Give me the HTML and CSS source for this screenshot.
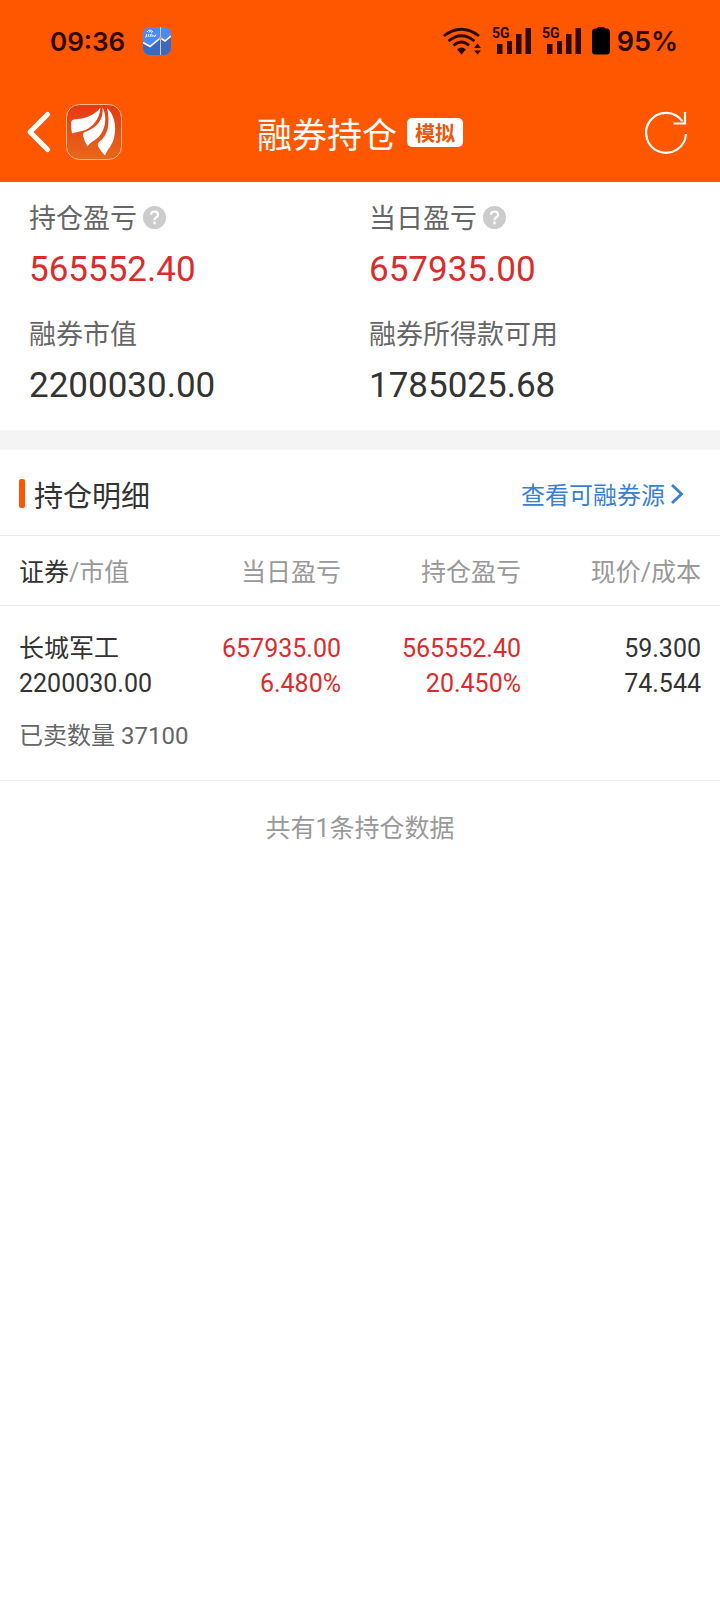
FILE: index.html
```html
<!DOCTYPE html>
<html lang="zh-CN">
<head>
<meta charset="utf-8">
<meta name="viewport" content="width=device-width, initial-scale=1">
<title>融券持仓</title>
<link rel="stylesheet" href="styles.css">
</head>
<body>
<header class="top">
  <div class="status">
    <div class="status-left">
      <span class="clock">09:36</span>
      <svg class="status-app" width="28" height="28" viewBox="0 0 28 28" aria-hidden="true">
        <defs><clipPath id="tile"><rect width="28" height="28" rx="7"/></clipPath></defs>
        <g clip-path="url(#tile)">
          <rect width="28" height="28" fill="#4a8cf7"/>
          <path d="M0 15L7 19L17 11L22 14L28 9V28H0Z" fill="#3a69bd"/>
          <path d="M17.500 0V28" stroke="#d9c9a8" stroke-width="1"/>
          <path d="M0 15.500L7 19.500L17.500 11L22 14L28 9" fill="none" stroke="#fff" stroke-width="1.600"/>
          <circle cx="17.500" cy="11" r="1.500" fill="#f0a030"/>
          <path d="M4 5Q7 1 10 5M6 5Q8 3 9 6M4 7Q2 8 4 9Q4 10 2 10M6 7L5 10M7 10L8 7Q10 7 9 10M11 8Q10 10 12 9.500L13 7.500" fill="none" stroke="#e8f0ff" stroke-width="1"/>
        </g>
      </svg>
    </div>
    <div class="status-right">
      <svg class="wifi" width="38" height="28" viewBox="0 0 38 28" aria-hidden="true">
        <g fill="none" stroke="currentColor" stroke-width="2.800">
          <path d="M.8 9Q18.500-4.500 36 9"/>
          <path d="M5.500 14Q18.500 3.500 31.500 14"/>
          <path d="M10.500 18.500Q18.500 11.500 26 18.500"/>
        </g>
        <path d="M14 22.500Q18.500 18.500 23 22.500L18.500 27.500Z" fill="currentColor"/>
        <path d="M31 21L34.500 16.500L38 21ZM31 23.500H38L34.500 27.500Z" fill="currentColor"/>
      </svg>
      <svg class="signal" width="39" height="28" viewBox="0 0 39 28" role="img" aria-label="5G">
        <text class="signal-label" x="0" y="11">5G</text>
        <path d="M5 17h5.500v10h-5.500zM15 14h5v13h-5zM24 7h5.500v20h-5.500zM33.500 1h5.500v26h-5.500z" fill="currentColor"/>
      </svg>
      <svg class="signal" width="39" height="28" viewBox="0 0 39 28" role="img" aria-label="5G">
        <text class="signal-label" x="0" y="11">5G</text>
        <path d="M5 17h5.500v10h-5.500zM15 14h5v13h-5zM24 7h5.500v20h-5.500zM33.500 1h5.500v26h-5.500z" fill="currentColor"/>
      </svg>
      <svg class="battery" width="18" height="28" viewBox="0 0 18 28" aria-hidden="true">
        <path d="M5 1.500Q5 0 7 0H11Q13 0 13 1.500H14.500Q18 1.500 18 5V24Q18 27.500 14.500 27.500H3.500Q0 27.500 0 24V5Q0 1.500 3.500 1.500Z" fill="#000"/>
      </svg>
      <span class="percent">95%</span>
    </div>
  </div>
  <nav class="nav">
    <div class="nav-left">
      <button class="icon-btn" type="button" aria-label="返回">
        <svg width="26" height="42" viewBox="0 0 26 42"><path d="M21.500 3.500L4 21L21.500 38.500" fill="none" stroke="#fff" stroke-width="5" stroke-linecap="round" stroke-linejoin="round"/></svg>
      </button>
      <svg class="logo" width="56" height="56" viewBox="0 0 56 56" aria-hidden="true">
        <defs><linearGradient id="logo-bg" x1="0" y1="0" x2="0" y2="1"><stop offset="0" stop-color="#e53912"/><stop offset="1" stop-color="#e8681a"/></linearGradient></defs>
        <rect x=".5" y=".5" width="55" height="55" rx="13" fill="url(#logo-bg)" stroke="#f6b98c"/>
        <g fill="#fff">
          <path d="M34.500 3.500C28 12 19 14.500 8 15.500Q5 16 5 19Q4.800 24 6 29.500C12 27 17 28 23 24C30 19 34 12 34.500 3.500Z"/>
          <path d="M36.500 3C38 15 31 24 19 28Q16.500 29 17 31.500Q18 37 21.500 42.500C25 37 31 36 35 30C40 22 41 12 36.500 3Z"/>
          <path d="M41 4C44.500 19 42 32 33 38Q31 39.500 32 42Q34.500 47.500 39 51.500C42 44 46 42 48 34C51 22 48 10 41 4Z"/>
        </g>
      </svg>
    </div>
    <div class="nav-title">
      <h1 class="title">融券持仓</h1>
      <span class="badge">模拟</span>
    </div>
    <div class="nav-right">
      <button class="icon-btn" type="button" aria-label="刷新">
        <svg width="44" height="44" viewBox="0 0 44 44"><path d="M42 24A20 20 0 1 1 38.500 11.500M41 2V13.500H29.500" fill="none" stroke="#fff" stroke-width="2.200"/></svg>
      </button>
    </div>
  </nav>
</header>

<main>
  <dl class="summary">
    <div class="metric">
      <dt class="metric-label">持仓盈亏
        <button class="icon-btn" type="button" aria-label="持仓盈亏说明"><svg width="23" height="23" viewBox="0 0 23 23"><circle cx="11.500" cy="11.500" r="11.500" fill="#ccc"/><path d="M8 8.800Q8 5.500 11.500 5.500T15 8.800Q15 10.500 13 11.500Q11.500 12.400 11.500 14.200" fill="none" stroke="#fff" stroke-width="2.200"/><circle cx="11.500" cy="17" r="1.400" fill="#fff"/></svg></button>
      </dt>
      <dd class="metric-value up">565552.40</dd>
    </div>
    <div class="metric">
      <dt class="metric-label">当日盈亏
        <button class="icon-btn" type="button" aria-label="当日盈亏说明"><svg width="23" height="23" viewBox="0 0 23 23"><circle cx="11.500" cy="11.500" r="11.500" fill="#ccc"/><path d="M8 8.800Q8 5.500 11.500 5.500T15 8.800Q15 10.500 13 11.500Q11.500 12.400 11.500 14.200" fill="none" stroke="#fff" stroke-width="2.200"/><circle cx="11.500" cy="17" r="1.400" fill="#fff"/></svg></button>
      </dt>
      <dd class="metric-value up">657935.00</dd>
    </div>
    <div class="metric">
      <dt class="metric-label">融券市值</dt>
      <dd class="metric-value">2200030.00</dd>
    </div>
    <div class="metric">
      <dt class="metric-label">融券所得款可用</dt>
      <dd class="metric-value">1785025.68</dd>
    </div>
  </dl>

  <section class="detail">
    <div class="detail-head">
      <h2 class="detail-title">持仓明细</h2>
      <a class="detail-link" href="#">查看可融券源
        <svg width="14" height="22" viewBox="0 0 14 22" aria-hidden="true"><path d="M2 2L11.500 11L2 20" fill="none" stroke="currentColor" stroke-width="2.800"/></svg>
      </a>
    </div>
    <table class="positions">
      <thead>
        <tr><th scope="col"><span class="strong">证券</span>/市值</th><th scope="col">当日盈亏</th><th scope="col">持仓盈亏</th><th scope="col">现价/成本</th></tr>
      </thead>
      <tbody>
        <tr class="position">
          <td>长城军工<br>2200030.00</td>
          <td class="up">657935.00<br>6.480%</td>
          <td class="up">565552.40<br>20.450%</td>
          <td>59.300<br>74.544</td>
        </tr>
        <tr class="sold"><td colspan="4">已卖数量 37100</td></tr>
      </tbody>
    </table>
    <p class="total">共有1条持仓数据</p>
  </section>
</main>
</body>
</html>
```
FILE: styles.css
```css
* {
  box-sizing: border-box;
}

body {
  margin: 0;
  background: #fff;
  color: #333;
  font-family: Roboto, "Noto Sans CJK SC", sans-serif;
  font-size: 25px;
}

h1, h2, dl, dd, p {
  margin: 0;
  font-weight: 400;
}

svg {
  display: block;
  flex: none;
  overflow: visible;
}

.icon-btn {
  display: block;
  padding: 0;
  border: 0;
  background: none;
}

.up {
  color: #db2c2c;
}

.title,
.badge,
.metric-label,
.detail-title,
.detail-link {
  font-family: "Noto Sans CJK SC", sans-serif;
}

/* Header */
.top {
  background: #ff5600;
}

.status {
  display: flex;
  justify-content: space-between;
  align-items: center;
  height: 82px;
  padding: 0 42px 0 50px;
  color: #2b0a00;
  font-family: Inter, sans-serif;
  font-size: 27px;
  font-weight: 600;
}

.status-left,
.status-right {
  display: flex;
  align-items: center;
}

.status-left {
  gap: 18px;
}

.status-right {
  gap: 11px;
}

.clock {
  font-size: 26px;
}

.signal-label {
  font-family: Roboto, sans-serif;
  font-size: 14px;
  font-weight: 700;
  fill: currentColor;
}

.percent {
  margin-left: -4px;
}

.nav {
  display: grid;
  grid-template-columns: 1fr auto 1fr;
  align-items: center;
  height: 100px;
  padding: 0 26px;
}

.nav-left,
.nav-title {
  display: flex;
  align-items: center;
}

.nav-left {
  gap: 14px;
}

.nav-title {
  gap: 10px;
}

.nav-right {
  justify-self: end;
  padding-right: 6px;
}

.title {
  padding-top: 2px;
  color: #fff;
  font-size: 35px;
  line-height: 48px;
}

.badge {
  padding: 0 8px;
  border-radius: 5px;
  background: #fff;
  color: #e8590c;
  font-size: 20px;
  font-weight: 700;
  line-height: 29px;
}

/* Summary */
.summary {
  display: grid;
  grid-template-columns: 1fr 1fr;
  gap: 18px;
  padding: 16px 29px 18px;
  border-bottom: 20px solid #f4f4f4;
}

.metric-label {
  display: flex;
  align-items: center;
  gap: 6px;
  margin-bottom: 8px;
  color: #666;
  font-size: 27px;
  line-height: 38px;
}

.metric-value {
  font-size: 35px;
  line-height: 52px;
}

/* Position details */
.detail-head {
  display: flex;
  justify-content: space-between;
  align-items: center;
  height: 86px;
  padding: 2px 36px 0 19px;
  border-bottom: 1px solid #ebebeb;
}

.detail-title {
  display: flex;
  align-items: center;
  gap: 9px;
  font-size: 29px;
  line-height: 40px;
}

.detail-title::before {
  content: "";
  width: 6px;
  height: 29px;
  border-radius: 2px;
  background: #f9560a;
}

.detail-link {
  display: flex;
  align-items: center;
  gap: 5px;
  color: #3a80d2;
  font-size: 24px;
  line-height: 36px;
  text-decoration: none;
}

.positions {
  width: 100%;
  border-collapse: collapse;
  table-layout: fixed;
  line-height: 35px;
  text-align: right;
}

.positions th {
  padding: 19px 19px 15px;
  border-bottom: 1px solid #ebebeb;
  color: #999;
  font-weight: 400;
  text-align: right;
  white-space: nowrap;
}

.positions td {
  padding: 0 19px;
  white-space: nowrap;
}

.positions th:first-child,
.positions td:first-child {
  text-align: left;
}

.strong {
  color: #333;
}

.position td {
  padding-top: 25px;
}

.sold td {
  padding-top: 18px;
  padding-bottom: 26px;
  border-bottom: 1px solid #ebebeb;
  color: #666;
  font-size: 24px;
}

.total {
  padding: 30px 19px;
  color: #999;
  line-height: 36px;
  text-align: center;
}
```
